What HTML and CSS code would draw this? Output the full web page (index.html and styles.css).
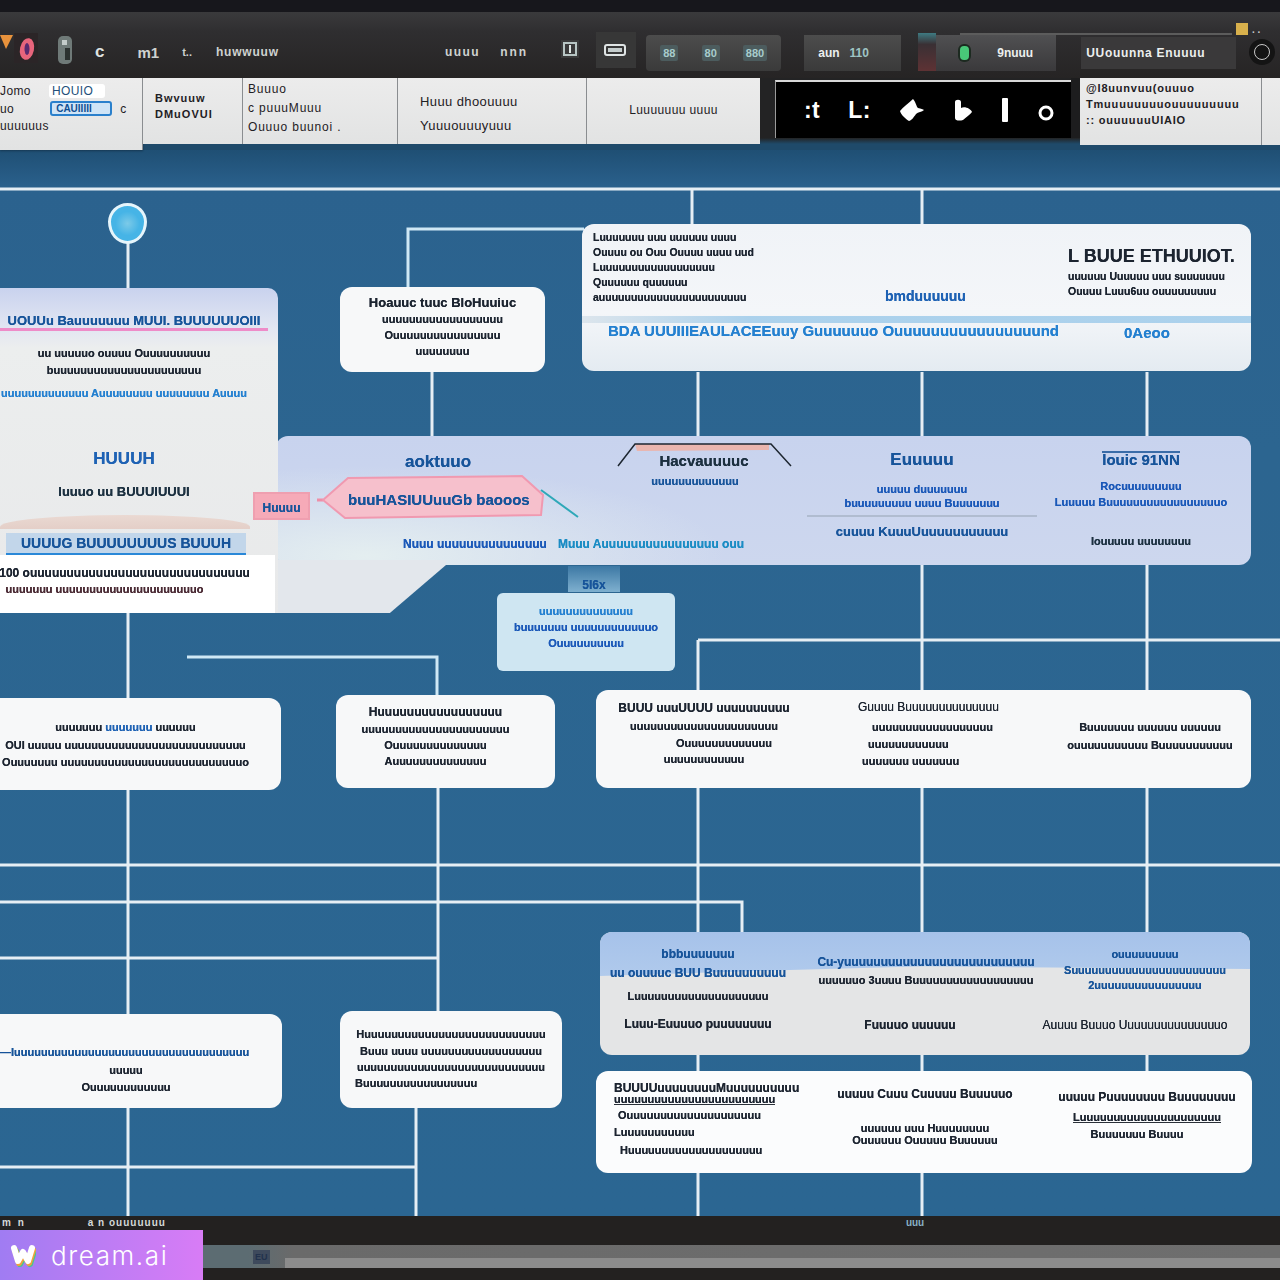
FILE: index.html
```html
<!DOCTYPE html>
<html lang="en">
<head>
  <meta charset="UTF-8" />
  <meta name="viewport" content="width=device-width, initial-scale=1.0">
  <title>Flow chart</title>
  <link rel="stylesheet" href="styles.css">
</head>
<body>

<div class="top-strip"></div>

<header class="toolbar">
  <svg class="logo" width="40" height="34" viewBox="0 0 40 34">
    <rect x="14" y="2" width="24" height="30" fill="#2b2527"/>
    <path d="M0 4h13l-7 14z" fill="#e8923c"/>
    <ellipse cx="27" cy="18" rx="7" ry="11" transform="rotate(12 27 18)" fill="#e8657c"/>
    <ellipse cx="27" cy="18" rx="2.5" ry="6" fill="#5a2a70"/>
  </svg>
  <svg class="tb-cyl" width="14" height="28" viewBox="0 0 14 28">
    <rect x="0" y="0" width="14" height="28" rx="5" fill="#6f7a78"/>
    <rect x="4" y="4" width="5" height="5" fill="#c4ccca"/>
    <rect x="7" y="12" width="5" height="12" fill="#2c3230"/>
  </svg>
  <span class="tb-txt tb-c">c</span>
  <span class="tb-txt tb-m">m1</span>
  <span class="tb-txt tb-t">t..</span>
  <span class="tb-txt tb-h">huwwuuw</span>
  <span class="tb-txt tb-o">uuuu</span>
  <span class="tb-txt tb-n">nnn</span>
  <svg class="tb-i1" width="20" height="20" viewBox="0 0 20 20">
    <rect x="1" y="1" width="18" height="18" fill="#3a3a3a"/>
    <path d="M4 4h12v12H4z" fill="none" stroke="#b8c6c4" stroke-width="2"/>
    <path d="M10 6v8" stroke="#dfe6e4" stroke-width="2"/>
  </svg>
  <div class="tb-box">
    <svg width="24" height="12" viewBox="0 0 24 12">
      <rect x="1" y="1" width="20" height="10" rx="2" fill="none" stroke="#dfe4e4" stroke-width="2"/>
      <rect x="4" y="4" width="14" height="4" fill="#c4cccc"/>
    </svg>
  </div>
  <div class="tb-group g1">
    <span class="chip">88</span>
    <span class="chip">80</span>
    <span class="chip">880</span>
  </div>
  <div class="tb-group g2">
    <span class="tb-txt wht">aun</span>
    <span class="tb-txt teal">110</span>
  </div>
  <div class="tb-pill"></div>
  <div class="tb-group g3">
    <i class="led"></i>
    <span class="tb-txt wht">9nuuu</span>
  </div>
  <div class="tb-group g4">
    <span class="tb-txt wht wide">UUouunna Enuuuu</span>
  </div>
  <div class="tb-ring"><i></i></div>
  <div class="tb-gold"><i></i><b>. .</b></div>
</header>

<nav class="ribbon">
  <div class="cell c1">
    <div class="row-a"><span>Jomo</span><span class="mini">HOUIO</span></div>
    <div class="row-a"><span>uo</span><span class="btn">CAUIIIII</span><span>c</span></div>
    <div>uuuuuus</div>
  </div>
  <div class="cell c2">
    <div class="ink">Bwvuuw</div>
    <div class="ink">DMuOVUI</div>
  </div>
  <div class="cell c3">
    <div>Buuuo</div>
    <div>c puuuMuuu</div>
    <div>Ouuuo buunoi .</div>
  </div>
  <div class="cell c4">
    <div>Huuu dhoouuuu</div>
    <div>Yuuuouuuyuuu</div>
  </div>
  <div class="cell c5">
    <div>Luuuuuuu uuuu</div>
  </div>
  <div class="tab-gap"></div>
  <div class="tab">
    <span class="glyph">:t</span>
    <span class="glyph">L:</span>
    <svg width="26" height="24" viewBox="0 0 26 24"><path d="M14 1c3 3 3 7 5 9 3 1 5 1 6 2-2 2-6 2-8 4-2 3-5 7-7 7-3-2-8-6-9-10 3-4 9-8 13-12z" fill="#fff"/></svg>
    <svg width="20" height="24" viewBox="0 0 20 24"><path d="M2 4c0-3 6-3 6 0v6c4-2 10 1 11 4-2 3-6 5-9 8-3 1-8 1-8-2z" fill="#fff"/></svg>
    <svg width="8" height="24" viewBox="0 0 8 24"><rect x="1" y="0" width="6" height="24" rx="1" fill="#fff"/></svg>
    <svg class="tab-ring" width="18" height="16" viewBox="0 0 18 16"><circle cx="9" cy="8" r="6" fill="none" stroke="#fff" stroke-width="3"/></svg>
  </div>
  <div class="tab-gap2"></div>
  <div class="cell c6">
    <div>@I8uunvuu(ouuuo</div>
    <div>Tmuuuuuuuuouuuuuuuuu</div>
    <div>:: ouuuuuuUIAIO</div>
  </div>
  <div class="cell c7"></div>
</nav>

<main class="canvas">
  <svg class="wires" width="1280" height="1066" viewBox="0 150 1280 1066">
    <g stroke="#e6eef4" stroke-width="3" fill="none">
      <path d="M0 189H1280M692 190V224M922 190V240"/>
      <path d="M128 243V290M432 372V436M698 372V436M922 372V436M1147 372V436"/>
      <path d="M128 613V700M922 565V690M1147 565V690M698 640H1280M698 640V690"/>
      <path d="M128 790V1015M438 788V1012M698 788V932M922 788V932M1147 788V932"/>
      <path d="M0 865H1280M0 902H742V932M0 958H438"/>
      <path d="M128 1108V1216M416 1108V1216M0 1167H416"/>
      <path d="M698 1055V1072M922 1055V1072M1147 1055V1072M698 1172V1216M922 1172V1216"/>
    </g>
    <g stroke="#cfe8f5" stroke-width="3" fill="none">
      <path d="M408 288V229H584M187 657H437V695"/>
    </g>
  </svg>

  <div class="pin"></div>

  <section class="node top-card">
    <div class="tc-col tc-left">
      <div class="ln sm">Luuuuuuu uuu uuuuuu uuuu</div>
      <div class="ln sm">Ouuuu ou Ouu Ouuuu uuuu uud</div>
      <div class="ln sm">Luuuuuuuuuuuuuuuuuu</div>
      <div class="ln sm">Quuuuuu quuuuuu</div>
      <div class="ln sm">auuuuuuuuuuuuuuuuuuuuuuu</div>
    </div>
    <div class="tc-mid ln blue b14">bmduuuuuu</div>
    <div class="tc-col tc-right">
      <div class="ln h18">L BUUE ETHUUIOT.</div>
      <div class="ln sm mt2">uuuuuu Uuuuuu uuu suuuuuuu</div>
      <div class="ln sm">Ouuuu Luuu6uu ouuuuuuuuu</div>
    </div>
    <div class="tc-stripe"></div>
    <div class="tc-blue ln sky b15">BDA UUUIIIEAULACEEuuy Guuuuuuo Ouuuuuuuuuuuuuuuund</div>
    <div class="tc-tail ln sky b15">0Aeoo</div>
  </section>

  <section class="node n-a">
    <div class="ln b13">Hoauuc tuuc BloHuuiuc</div>
    <div class="ln b11">uuuuuuuuuuuuuuuuuu</div>
    <div class="ln b11">Ouuuuuuuuuuuuuuuu</div>
    <div class="ln b11">uuuuuuuu</div>
  </section>

  <section class="node band">
    <div class="b-col b-a">
      <div class="ln navy h17">aoktuuo</div>
    </div>
    <div class="b-col b-b">
      <div class="ln dk h15">Hacvauuuuc</div>
      <div class="ln navy b11 mt3 sub-l">uuuuuuuuuuuuu</div>
    </div>
    <div class="b-col b-c">
      <div class="ln navy h17">Euuuuu</div>
      <div class="ln blue2 b11 mt12">uuuuu duuuuuuu</div>
      <div class="ln blue2 b11">buuuuuuuuu uuuu Buuuuuuu</div>
      <div class="b-rule"></div>
      <div class="ln navy b13">cuuuu KuuuUuuuuuuuuuuu</div>
    </div>
    <div class="b-col b-d">
      <div class="b-thin"></div>
      <div class="ln navy b15">louic 91NN</div>
      <div class="ln blue2 b11 mt12">Rocuuuuuuuuu</div>
      <div class="ln blue2 b11 mt2">Luuuuu Buuuuuuuuuuuuuuuuuo</div>
      <div class="ln dk b11 mt25">Iouuuuu uuuuuuuu</div>
    </div>
    <div class="b-foot">
      <span class="ln blue2 b12">Nuuu uuuuuuuuuuuuuuu</span>
      <span class="ln sky2 b12">Muuu Auuuuuuuuuuuuuuuu ouu</span>
    </div>
  </section>

  <div class="band-foot"></div>

  <section class="node left-card">
    <div class="lc-title"><span class="ln navy b13">UOUUu Bauuuuuuu MUUI. BUUUUUUOIII</span></div>
    <div class="ln b11 mt15">uu uuuuuo ouuuu Ouuuuuuuuuu</div>
    <div class="ln b11 mt3">buuuuuuuuuuuuuuuuuuuuuu</div>
    <div class="ln sky b11 mt9">uuuuuuuuuuuuu Auuuuuuuu uuuuuuuu Auuuu</div>
    <div class="ln blue h17 mt49">HUUUH</div>
    <div class="ln dk b13 mt16">Iuuuo uu BUUUIUUUI</div>
    <div class="lc-wave"></div>
    <div class="lc-sub"><span class="ln navy b14">UUUUG BUUUUUUUUS BUUUH</span></div>
    <div class="lc-white">
      <div class="ln b12">100 ouuuuuuuuuuuuuuuuuuuuuuuuuuuuuu</div>
      <div class="ln b11 rosy lc-sh">uuuuuuu uuuuuuuuuuuuuuuuuuuuuo</div>
    </div>
  </section>

  <div class="tag ln navy b12">Huuuu</div>
  <svg class="hex" width="262" height="50" viewBox="0 0 262 50">
    <path d="M0 27H6" stroke="#ee8fa8" stroke-width="3"/>
    <path d="M6 27L31 5 205 3 226 22 224 42 28 45z" fill="#f6c0cc" stroke="#f099b0" stroke-width="2"/>
    <path d="M224 17L261 44" stroke="#2ea8b8" stroke-width="2"/>
  </svg>
  <div class="hex-txt ln navy b15">buuHASIUUuuGb baooos</div>
  <svg class="trap" width="176" height="30" viewBox="0 0 176 30">
    <path d="M18 6H152V12L20 13z" fill="#eab5ae"/>
    <path d="M1 28L18 6H154L174 28" fill="none" stroke="#1d2630" stroke-width="1.5"/>
  </svg>

  <div class="lbl ln navy b12">5I6x</div>
  <section class="node sky-box">
    <div class="ln sky b11">uuuuuuuuuuuuuu</div>
    <div class="ln blue2 b11 mt2">buuuuuuu uuuuuuuuuuuuo</div>
    <div class="ln blue2 b11 mt2">Ouuuuuuuuuu</div>
  </section>

  <section class="node r2-a">
    <div class="ln b11">uuuuuuu <span class="blue">uuuuuuu</span> uuuuuu</div>
    <div class="ln b11 mt4">OUI uuuuu uuuuuuuuuuuuuuuuuuuuuuuuuuu</div>
    <div class="ln b11 mt3">Ouuuuuuu uuuuuuuuuuuuuuuuuuuuuuuuuuuo</div>
  </section>
  <section class="node r2-b">
    <div class="ln b12">Huuuuuuuuuuuuuuuuu</div>
    <div class="ln b11 mt3">uuuuuuuuuuuuuuuuuuuuuu</div>
    <div class="ln b11 mt2">Ouuuuuuuuuuuuuu</div>
    <div class="ln b11 mt2">Auuuuuuuuuuuuuu</div>
  </section>
  <section class="node r2-c">
    <div class="w-col w-1">
      <div class="ln b12">BUUU uuuUUUU uuuuuuuuuu</div>
      <div class="ln b11 mt4">uuuuuuuuuuuuuuuuuuuuuu</div>
      <div class="ln b11 mt3 in40">Ouuuuuuuuuuuuu</div>
      <div class="ln b11 mt2">uuuuuuuuuuuu</div>
    </div>
    <div class="w-col w-2">
      <div class="ln b12 reg">Guuuu Buuuuuuuuuuuuuu</div>
      <div class="ln b11 mt6 ml14">uuuuuuuuuuuuuuuuuu</div>
      <div class="ln b11 mt3 ml10">uuuuuuuuuuuu</div>
      <div class="ln b11 mt3 ml4">uuuuuuu uuuuuuu</div>
    </div>
    <div class="w-col w-3">
      <div class="ln b11">Buuuuuuu uuuuuu uuuuuu</div>
      <div class="ln b11 mt4">ouuuuuuuuuuu Buuuuuuuuuuu</div>
    </div>
  </section>

  <section class="node r3">
    <div class="r3-wave"></div>
    <div class="w-col r3-1">
      <div class="ln navy b12">bbbuuuuuuu</div>
      <div class="ln navy b12 mt5">uu ouuuuc BUU Buuuuuuuuuu</div>
      <div class="ln b11 mt9">Luuuuuuuuuuuuuuuuuuuu</div>
      <div class="ln b12 mt14">Luuu-Euuuuo puuuuuuuu</div>
    </div>
    <div class="w-col r3-2">
      <div class="ln navy b12">Cu-yuuuuuuuuuuuuuuuuuuuuuuuuuu</div>
      <div class="ln b11 mt4">uuuuuuo 3uuuu Buuuuuuuuuuuuuuuuuu</div>
      <div class="ln b12 mt31 sh-l">Fuuuuo uuuuuu</div>
    </div>
    <div class="w-col r3-3">
      <div class="ln navy b11">ouuuuuuuuu</div>
      <div class="ln navy b11 mt2">Suuuuuuuuuuuuuuuuuuuuuuu</div>
      <div class="ln navy b11 mt1">2uuuuuuuuuuuuuuuu</div>
      <div class="ln b12 mt26 reg sh-m">Auuuu Buuuo Uuuuuuuuuuuuuuuo</div>
    </div>
  </section>

  <section class="node r4-a">
    <div class="ln navy b11 r4-first">—Iuuuuuuuuuuuuuuuuuuuuuuuuuuuuuuuuuuu</div>
    <div class="ln b11 mt4">uuuuu</div>
    <div class="ln b11 mt3">Ouuuuuuuuuuuu</div>
  </section>
  <section class="node r4-b">
    <div class="ln b11">Huuuuuuuuuuuuuuuuuuuuuuuuuuu</div>
    <div class="ln b11 mt3">Buuu uuuu uuuuuuuuuuuuuuuuuu</div>
    <div class="ln b11 mt2">uuuuuuuuuuuuuuuuuuuuuuuuuuuu</div>
    <div class="ln b11 mt2 r4-last">Buuuuuuuuuuuuuuuuu</div>
  </section>
  <section class="node r4-c">
    <div class="w-col r4-1">
      <div class="ln b12">BUUUUuuuuuuuuMuuuuuuuuuu</div>
      <div class="ln b11 under">uuuuuuuuuuuuuuuuuuuuuuuu</div>
      <div class="ln b11 mt3 ml4">Ouuuuuuuuuuuuuuuuuuuu</div>
      <div class="ln b11 mt3">Luuuuuuuuuuu</div>
      <div class="ln b11 mt4 ml6">Huuuuuuuuuuuuuuuuuuuu</div>
    </div>
    <div class="w-col r4-2">
      <div class="ln b12">uuuuu Cuuu Cuuuuu Buuuuuo</div>
      <div class="ln b11 mt20">uuuuuu uuu Huuuuuuuu</div>
      <div class="ln b11 mtn2">Ouuuuuu Ouuuuu Buuuuuu</div>
    </div>
    <div class="w-col r4-3">
      <div class="ln b12">uuuuu Puuuuuuuu Buuuuuuuu</div>
      <div class="ln b11 mt9 under">Luuuuuuuuuuuuuuuuuuuuu</div>
      <div class="ln b11 mt4 sh-m">Buuuuuuu Buuuu</div>
    </div>
  </section>
</main>

<footer class="status">
  <div class="st-top">
    <span class="st-a">m n</span>
    <span class="st-b">a n ouuuuuuu</span>
    <span class="st-c">uuu</span>
  </div>
  <div class="st-bar"><span class="st-key">EU</span><i class="st-fill"></i></div>
</footer>

<div class="watermark">
  <svg width="26" height="26" viewBox="0 0 26 26">
    <path d="M4 6l4 13 5-9 5 9 4-13" transform="translate(2 3)" fill="none" stroke="#46c88c" stroke-width="6" stroke-linecap="round" stroke-linejoin="round"/>
    <path d="M4 6l4 13 5-9 5 9 4-13" transform="translate(1 2)" fill="none" stroke="#f2a03c" stroke-width="6" stroke-linecap="round" stroke-linejoin="round"/>
    <path d="M4 6l4 13 5-9 5 9 4-13" fill="none" stroke="#fff" stroke-width="6" stroke-linecap="round" stroke-linejoin="round"/>
  </svg>
  <span>dream.ai</span>
</div>

</body>
</html>
```

FILE: styles.css
```css
* {
  box-sizing: border-box;
}
body {
  margin: 0;
  width: 1280px;
  height: 1280px;
  overflow: hidden;
  position: relative;
  font-family: "Liberation Sans", Arial, sans-serif;
  color: #1c2430;
  background: #1e1c1c;
  display: flex;
  flex-direction: column;
}

/* top chrome */
.top-strip {
  height: 12px;
  background: #17171c;
}
.toolbar {
  height: 66px;
  position: relative;
  display: flex;
  align-items: center;
  background: linear-gradient(180deg, #3a3a3c 0%, #2f2e30 30%, #262424 100%);
  padding-top: 14px;
}
.toolbar::after {
  content: "";
  position: absolute;
  left: 960px;
  top: 21px;
  width: 272px;
  height: 2px;
  background: #5c5c5c;
}
.logo {
  flex: none;
  margin-top: -8px;
}
.tb-cyl {
  margin-left: 18px;
  margin-top: -4px;
}
.tb-txt {
  font-size: 12px;
  font-weight: bold;
  color: #cfd2d0;
  white-space: nowrap;
}
.tb-c {
  margin-left: 23px;
  font-size: 17px;
  color: #dfe2e0;
}
.tb-m {
  margin-left: 33px;
  font-size: 15px;
}
.tb-t {
  margin-left: 23px;
  font-size: 11px;
}
.tb-h {
  margin-left: 24px;
  letter-spacing: 0.8px;
}
.tb-o {
  margin-left: 166px;
  letter-spacing: 1.5px;
}
.tb-n {
  margin-left: 20px;
  letter-spacing: 2px;
}
.tb-i1 {
  margin-left: 32px;
  margin-top: -6px;
}
.tb-box {
  width: 40px;
  height: 36px;
  margin-left: 16px;
  display: flex;
  align-items: center;
  justify-content: center;
  background: #373737;
  margin-top: -4px;
}
.tb-group {
  height: 36px;
  display: flex;
  align-items: center;
  margin-top: 2px;
  background: linear-gradient(180deg, #4c4c4c, #3a3a3a);
}
.g1 {
  width: 135px;
  margin-left: 10px;
  padding: 0 14px;
  justify-content: space-between;
  border-radius: 4px;
}
.chip {
  font-size: 11px;
  font-weight: bold;
  color: #a8cccc;
  background: #4c5c5e;
  padding: 2px 3px;
  border-radius: 2px;
}
.g2 {
  width: 97px;
  margin-left: 23px;
  padding: 0 14px;
  gap: 10px;
}
.wht {
  color: #ecefee;
}
.wide {
  letter-spacing: 0.7px;
}
.teal {
  color: #9fc4c4;
}
.tb-pill {
  width: 18px;
  height: 38px;
  margin-left: 17px;
  background: linear-gradient(180deg, #3e7a82 0, #3a3034 30%, #5e3234 100%);
}
.g3 {
  width: 120px;
  padding-left: 24px;
  gap: 28px;
  background: linear-gradient(180deg, #505052, #3a393b);
}
.led {
  width: 9px;
  height: 14px;
  border-radius: 4px;
  background: #48c878;
  box-shadow: 0 0 0 2px #1c2a20;
}
.g4 {
  width: 155px;
  margin-left: 25px;
  padding-left: 5px;
  background: #3a393a;
  height: 32px;
}
.tb-ring {
  width: 26px;
  height: 26px;
  margin-left: 13px;
  border-radius: 50%;
  background: #141414;
  display: flex;
  align-items: center;
  justify-content: center;
}
.tb-ring i {
  width: 16px;
  height: 16px;
  border: 1px solid #c8c8c8;
  border-radius: 50%;
}
.tb-gold {
  position: absolute;
  left: 1236px;
  top: 11px;
  display: flex;
  align-items: flex-end;
  gap: 4px;
  color: #c8c8c8;
  font-size: 10px;
  line-height: 10px;
}
.tb-gold i {
  width: 12px;
  height: 12px;
  background: #d8b04c;
}

/* ribbon */
.ribbon {
  height: 72px;
  display: flex;
  align-items: flex-start;
  background: linear-gradient(180deg, #232324 0, #232324 60px, #1f4a6a 66px);
  position: relative;
  z-index: 2;
  font-size: 12px;
  letter-spacing: 0.4px;
  color: #1e2024;
}
.cell {
  height: 66px;
  background: linear-gradient(180deg, #ececec, #e2e3e3);
  border-right: 1px solid #8a8d90;
  display: flex;
  flex-direction: column;
  white-space: nowrap;
}
.c1 {
  width: 143px;
  height: 72px;
  padding-top: 6px;
  gap: 3px;
  overflow: hidden;
  box-shadow: 0 1px 2px rgba(0, 0, 0, 0.3);
}
.row-a {
  display: flex;
  align-items: center;
  gap: 8px;
}
.mini {
  color: #24507a;
  background: #fff;
  border-radius: 3px;
  padding: 0 12px 0 3px;
  margin-left: 10px;
}
.btn {
  color: #0f4f92;
  font-size: 10px;
  font-weight: bold;
  letter-spacing: 0;
  background: #cfe4f6;
  border: 2px solid #2a80cc;
  border-radius: 3px;
  padding: 0 4px;
  margin-left: 28px;
  overflow: hidden;
  width: 62px;
}
.c2 {
  width: 100px;
  padding: 14px 0 0 12px;
  gap: 4px;
}
.ink {
  font-weight: bold;
  font-size: 11px;
  letter-spacing: 1px;
}
.c3 {
  width: 155px;
  padding: 4px 0 0 5px;
  gap: 5px;
  letter-spacing: 0.8px;
}
.c4 {
  width: 189px;
  padding: 16px 0 0 22px;
  gap: 9px;
  font-size: 13px;
}
.c5 {
  width: 173px;
  padding-top: 25px;
  align-items: center;
  border-right: 0;
}
.tab-gap {
  width: 15px;
  height: 60px;
  background: #232324;
}
.tab {
  width: 296px;
  height: 58px;
  margin-top: 2px;
  background: #000;
  border-top: 2px solid #d8d8d8;
  border-left: 1px solid #9a9a9a;
  display: flex;
  align-items: center;
  padding: 0 16px 0 28px;
  justify-content: space-between;
}
.glyph {
  color: #fff;
  font-size: 23px;
  font-weight: bold;
}
.tab-ring {
  margin-top: 6px;
}
.tab-gap2 {
  width: 9px;
  height: 60px;
  background: #1d1d1e;
}
.c6 {
  width: 182px;
  height: 67px;
  padding: 3px 0 0 6px;
  gap: 2px;
  font-weight: bold;
  font-size: 11px;
  letter-spacing: 0.8px;
  line-height: 14px;
}
.c7 {
  width: 18px;
  height: 67px;
  border-right: 0;
}

/* diagram */
.canvas {
  height: 1066px;
  position: relative;
  overflow: hidden;
  background: linear-gradient(180deg, #1f4f74 0, #2b628e 40px, #2c6590 300px, #2b6692 100%);
}
.wires {
  position: absolute;
  left: 0;
  top: 0;
}
.pin {
  position: absolute;
  left: 108px;
  top: 53px;
  width: 39px;
  height: 41px;
  border-radius: 50% 50% 50% 50% / 46% 46% 54% 54%;
  background: radial-gradient(circle at 50% 50%, #7ccae8 0, #46b4e6 50%);
  border: 3px solid #e6f5fb;
}
.node {
  position: absolute;
  display: flex;
  flex-direction: column;
  align-items: center;
  background: #f7f8f9;
  border-radius: 12px;
}
.ln {
  display: block;
  line-height: 14px;
  white-space: nowrap;
  filter: blur(0.35px);
  text-shadow: 0 0 0.6px currentColor;
}
.b11 { font-size: 11px; font-weight: bold; }
.b12 { font-size: 12px; font-weight: bold; }
.b13 { font-size: 13px; font-weight: bold; }
.b14 { font-size: 14px; font-weight: bold; }
.b15 { font-size: 15px; font-weight: bold; }
.h15 { font-size: 15px; font-weight: bold; line-height: 20px; }
.h17 { font-size: 17px; font-weight: bold; line-height: 20px; }
.h18 { font-size: 18px; font-weight: bold; line-height: 22px; }
.sm { font-size: 10.5px; font-weight: bold; line-height: 15px; }
.reg { font-weight: normal; }
.navy { color: #17549a; }
.blue { color: #1e62b4; }
.blue2 { color: #1a58b8; }
.sky { color: #2480d0; }
.sky2 { color: #1a8cc4; }
.dk { color: #1c3040; }
.rosy { color: #4a2a34; }
.mtn2 { margin-top: -2px; }
.mt1 { margin-top: 1px; }
.mt2 { margin-top: 2px; }
.mt3 { margin-top: 3px; }
.mt4 { margin-top: 4px; }
.mt5 { margin-top: 5px; }
.mt6 { margin-top: 6px; }
.mt9 { margin-top: 9px; }
.mt12 { margin-top: 12px; }
.mt14 { margin-top: 14px; }
.mt15 { margin-top: 15px; }
.mt16 { margin-top: 16px; }
.mt20 { margin-top: 20px; }
.mt25 { margin-top: 25px; }
.mt26 { margin-top: 26px; }
.mt31 { margin-top: 31px; }
.mt49 { margin-top: 49px; }
.ml4 { margin-left: 4px; }
.ml6 { margin-left: 6px; }
.ml10 { margin-left: 10px; }
.ml14 { margin-left: 14px; }

.top-card {
  left: 582px;
  top: 74px;
  width: 669px;
  height: 147px;
  display: block;
  background: linear-gradient(180deg, #f0f3f7 0, #f4f6f9 60%, #e4ebf1 100%);
}
.tc-col {
  position: absolute;
  display: flex;
  flex-direction: column;
}
.tc-left {
  left: 11px;
  top: 6px;
}
.tc-mid {
  position: absolute;
  left: 303px;
  top: 65px;
}
.tc-right {
  left: 486px;
  top: 21px;
}
.tc-stripe {
  position: absolute;
  left: 0;
  right: 0;
  top: 92px;
  height: 7px;
  background: linear-gradient(90deg, #d8e2ea 0, #9fcbea 25%, #9fcbea 100%);
  opacity: 0.85;
}
.tc-blue {
  position: absolute;
  left: 26px;
  top: 100px;
}
.tc-tail {
  position: absolute;
  left: 542px;
  top: 102px;
}

.n-a {
  left: 340px;
  top: 137px;
  width: 205px;
  height: 85px;
  padding-top: 9px;
  gap: 2px;
}

.band {
  left: 276px;
  top: 286px;
  width: 975px;
  height: 129px;
  display: block;
  background: radial-gradient(ellipse 360px 90px at 90px 120px, #e4eef0 0, rgba(228, 238, 240, 0) 100%), linear-gradient(180deg, #c8d3ee, #cdd7ee);
}
.b-col {
  position: absolute;
  display: flex;
  flex-direction: column;
  align-items: center;
}
.b-a {
  left: 0;
  width: 324px;
  top: 16px;
}
.b-b {
  left: 324px;
  width: 208px;
  top: 15px;
}
.sub-l {
  margin-right: 18px;
}
.b-c {
  left: 529px;
  width: 234px;
  top: 14px;
}
.b-rule {
  width: 230px;
  height: 2px;
  margin: 5px 0 8px;
  background: #b0bcd0;
}
.b-d {
  left: 765px;
  width: 200px;
  top: 15px;
}
.b-thin {
  width: 78px;
  height: 2px;
  background: #3a6ca8;
}
.b-foot {
  position: absolute;
  left: 127px;
  top: 101px;
  display: flex;
  gap: 11px;
}
.band-foot {
  position: absolute;
  left: 276px;
  top: 410px;
  width: 170px;
  height: 53px;
  background: #e3e7ec;
  clip-path: polygon(0 0, 100% 0, 100% 5px, 67% 100%, 0 100%);
}

.left-card {
  left: 0;
  top: 138px;
  width: 278px;
  height: 325px;
  padding: 26px 30px 0 0;
  border-radius: 0 10px 0 0;
  background: linear-gradient(180deg, #c9d2ee 0, #e2e6f2 40px, #eceeee 60px, #e8e9ea 100%);
}
.lc-title {
  width: 268px;
  align-self: flex-start;
  border-bottom: 3px solid #ee8cc8;
  overflow: hidden;
  display: flex;
  justify-content: center;
}
.lc-wave {
  position: absolute;
  left: 0;
  top: 227px;
  width: 250px;
  height: 14px;
  background: linear-gradient(180deg, #ead9d2, #e4cfc8);
  border-radius: 60% 60% 0 0 / 100% 100% 0 0;
}
.lc-sub {
  position: absolute;
  left: 6px;
  top: 245px;
  width: 240px;
  height: 22px;
  background: #c2d6ea;
  border-bottom: 2px solid #2a88d8;
  display: flex;
  justify-content: center;
  align-items: center;
  overflow: hidden;
}
.lc-white {
  position: absolute;
  left: 0;
  top: 267px;
  width: 275px;
  height: 58px;
  background: #fff;
  padding: 11px 26px 0 0;
  display: flex;
  flex-direction: column;
  gap: 2px;
  align-items: center;
}
.lc-sh {
  margin-right: 40px;
}

.tag {
  position: absolute;
  left: 253px;
  top: 342px;
  width: 57px;
  height: 28px;
  line-height: 28px;
  text-align: center;
  background: #f6aab8;
  border: 2px solid #ef9fb0;
}
.hex {
  position: absolute;
  left: 317px;
  top: 323px;
}
.hex-txt {
  position: absolute;
  left: 348px;
  top: 343px;
}
.trap {
  position: absolute;
  left: 617px;
  top: 288px;
}
.lbl {
  position: absolute;
  left: 568px;
  top: 416px;
  width: 52px;
  height: 26px;
  padding-top: 12px;
  text-align: center;
  background: linear-gradient(180deg, #3c78a4, #7fb0cf);
}
.sky-box {
  left: 497px;
  top: 443px;
  width: 178px;
  height: 78px;
  padding-top: 11px;
  background: #cfe6f2;
  border-radius: 6px;
}

.r2-a {
  left: 0;
  top: 548px;
  width: 281px;
  height: 92px;
  padding: 22px 30px 0 0;
  border-radius: 0 12px 12px 0;
}
.r2-b {
  left: 336px;
  top: 545px;
  width: 219px;
  height: 93px;
  padding: 10px 20px 0 0;
}
.r2-c {
  left: 596px;
  top: 540px;
  width: 655px;
  height: 98px;
}
.w-col {
  position: absolute;
  display: flex;
  flex-direction: column;
  align-items: center;
}
.w-1 {
  left: 18px;
  top: 11px;
  width: 180px;
}
.in40 {
  margin-left: 40px;
}
.w-2 {
  left: 262px;
  top: 10px;
  width: 150px;
  align-items: flex-start;
}
.w-3 {
  left: 474px;
  top: 30px;
  width: 160px;
}

.r3 {
  left: 600px;
  top: 782px;
  width: 650px;
  height: 123px;
  background: #e4e5e6;
  overflow: hidden;
}
.r3-wave {
  position: absolute;
  left: 0;
  right: 0;
  top: 0;
  height: 44px;
  background: linear-gradient(180deg, #a6c2ea, #b0caec);
  clip-path: polygon(0 0, 100% 0, 100% 84%, 80% 82%, 50% 78%, 32% 85%, 0 100%);
}
.r3-1 {
  left: 8px;
  top: 15px;
  width: 180px;
}
.r3-2 {
  left: 214px;
  top: 23px;
  width: 224px;
}
.sh-l {
  margin-right: 32px;
}
.r3-3 {
  left: 452px;
  top: 15px;
  width: 186px;
}
.sh-m {
  margin-right: 20px;
}

.r4-a {
  left: 0;
  top: 864px;
  width: 282px;
  height: 94px;
  padding: 31px 30px 0 0;
  border-radius: 0 12px 12px 0;
}
.r4-first {
  align-self: flex-start;
}
.r4-b {
  left: 340px;
  top: 861px;
  width: 222px;
  height: 97px;
  padding-top: 16px;
}
.r4-last {
  align-self: flex-start;
  margin-left: 15px;
}
.r4-c {
  left: 596px;
  top: 921px;
  width: 656px;
  height: 102px;
  background: #fbfcfd;
}
.r4-1 {
  left: 18px;
  top: 10px;
  width: 184px;
  align-items: flex-start;
}
.under {
  border-bottom: 1px solid #2a3038;
  line-height: 9px;
}
.r4-2 {
  left: 236px;
  top: 16px;
  width: 186px;
}
.r4-3 {
  left: 462px;
  top: 19px;
  width: 178px;
}

/* bottom chrome */
.status {
  height: 64px;
  background: #232120;
  position: relative;
}
.st-top {
  height: 29px;
  position: relative;
  display: flex;
  font-size: 10px;
  font-weight: bold;
  color: #d4d8d8;
  padding-top: 1px;
}
.st-a {
  margin-left: 2px;
  letter-spacing: 2px;
}
.st-b {
  margin-left: 62px;
  letter-spacing: 1px;
}
.st-c {
  margin-left: 740px;
  color: #88b0c4;
}
.st-bar {
  height: 23px;
  margin-left: 203px;
  display: flex;
  align-items: center;
  background: linear-gradient(90deg, #5c6c72 0, #5c6c72 45px, #6a6a6a 90px, #6e6e6e 100%);
}
.st-key {
  margin-left: 50px;
  font-size: 9px;
  font-weight: bold;
  color: #22324c;
  background: #3e4a5c;
  padding: 2px;
}
.st-fill {
  flex: 1;
  height: 10px;
  align-self: flex-end;
  margin-left: 15px;
  background: #8c8c8c;
}

.watermark {
  position: absolute;
  left: 0;
  top: 1230px;
  width: 203px;
  height: 50px;
  display: flex;
  align-items: center;
  gap: 15px;
  padding-left: 10px;
  background: linear-gradient(90deg, #a07cf2, #d87cf6);
  color: #fff;
  font-family: Inter, "Noto Sans", sans-serif;
  font-weight: 300;
  font-size: 26px;
  letter-spacing: 1.6px;
}
```
